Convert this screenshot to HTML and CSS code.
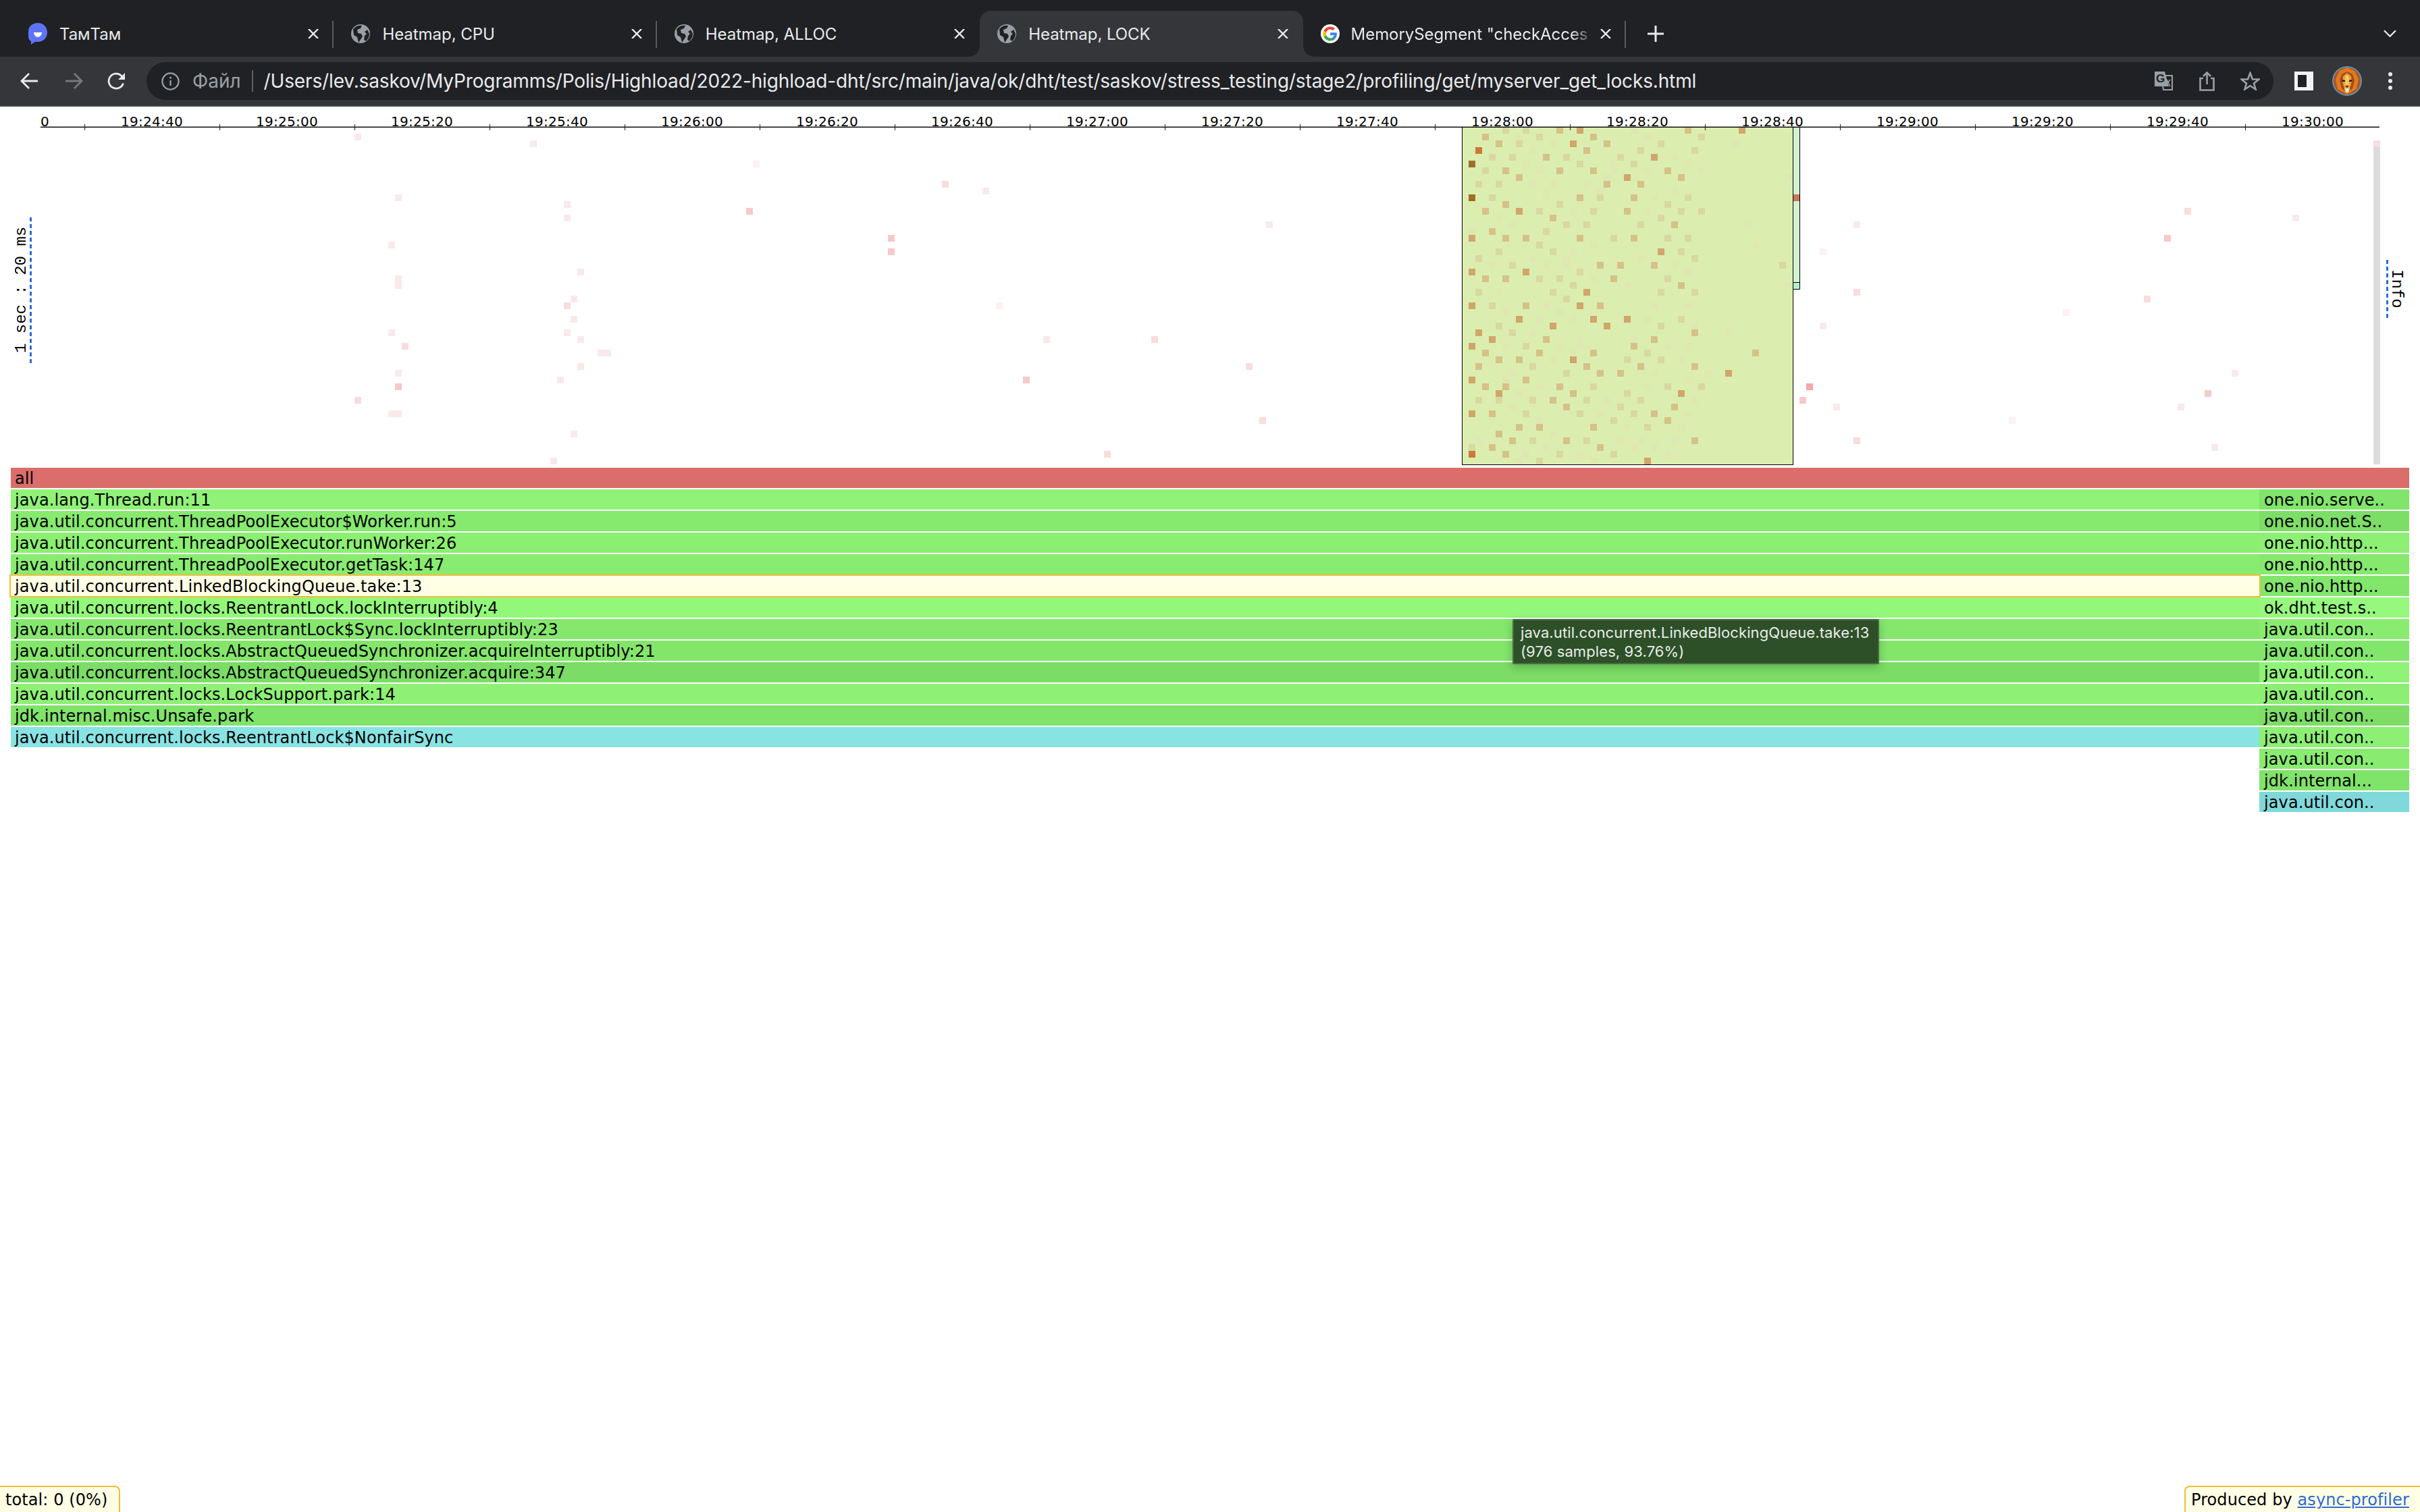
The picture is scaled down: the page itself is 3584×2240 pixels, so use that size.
FILE: index.html
```html
<!DOCTYPE html>
<html lang="en">
<head>
<meta charset="utf-8">
<title>Heatmap, LOCK</title>
<link rel="stylesheet" href="styles.css">
</head>
<body>
<header class="browser">
  <div class="tabstrip">
    <div class="tab sep">
      <svg class="favicon" viewBox="0 0 28 32"><path class="tt-bubble" d="M14 0C6 0 0 5 0 13v7c0 4 2 6 4 7l0 5 6-4h4c8 0 14-6 14-14S22 0 14 0z"/><path class="tt-mark" d="M8 14h12c0 4-3 7-6 7s-6-3-6-7z"/></svg>
      <span class="tab-title">ТамТам</span>
      <svg class="close" viewBox="0 0 16 14"><path d="M1 0l14 14M15 0L1 14"/></svg>
    </div>
    <div class="tab sep">
      <svg class="favicon" viewBox="0 0 28 28"><use href="#globe"/></svg>
      <span class="tab-title">Heatmap, CPU</span>
      <svg class="close" viewBox="0 0 16 14"><path d="M1 0l14 14M15 0L1 14"/></svg>
    </div>
    <div class="tab">
      <svg class="favicon" viewBox="0 0 28 28"><use href="#globe"/></svg>
      <span class="tab-title">Heatmap, ALLOC</span>
      <svg class="close" viewBox="0 0 16 14"><path d="M1 0l14 14M15 0L1 14"/></svg>
    </div>
    <div class="tab active">
      <svg class="favicon" viewBox="0 0 28 28"><use href="#globe"/></svg>
      <span class="tab-title">Heatmap, LOCK</span>
      <svg class="close" viewBox="0 0 16 14"><path d="M1 0l14 14M15 0L1 14"/></svg>
    </div>
    <div class="tab sep">
      <svg class="favicon" viewBox="0 0 48 48"><circle cx="24" cy="24" r="24" fill="#fff"/><path fill="#4285f4" d="M41 24.400c0-1.300-.1-2.500-.3-3.600H24v6.900h9.600c-.4 2.200-1.700 4-3.500 5.300v4.400h5.700c3.300-3 5.200-7.500 5.200-13z"/><path fill="#34a853" d="M24 42c4.800 0 8.800-1.600 11.800-4.300l-5.700-4.400c-1.600 1.100-3.600 1.700-6.100 1.700-4.700 0-8.600-3.200-10-7.400H8v4.500C11 38 17 42 24 42z"/><path fill="#fbbc05" d="M14 27.600c-.4-1.100-.6-2.300-.6-3.600s.2-2.500.6-3.600v-4.500H8C6.700 18.300 6 21 6 24s.7 5.700 2 8.100z"/><path fill="#ea4335" d="M24 13c2.600 0 5 .9 6.800 2.700l5.100-5.100C32.800 7.700 28.800 6 24 6 17 6 11 10 8 15.900l6 4.500c1.400-4.200 5.300-7.400 10-7.400z"/></svg>
      <span class="tab-title fade">MemorySegment "checkAcces</span>
      <svg class="close" viewBox="0 0 16 14"><path d="M1 0l14 14M15 0L1 14"/></svg>
    </div>
    <svg class="newtab" viewBox="0 0 24 24"><path d="M12 0v24M0 12h24"/></svg>
    <svg class="tablist" viewBox="0 0 20 11"><path d="M1 1l9 9 9-9"/></svg>
  </div>
  <div class="toolbar">
    <svg class="nav-icon back" viewBox="0 0 27 26"><path d="M26 13H3M13 2L2 13l11 11"/></svg>
    <svg class="nav-icon forward" viewBox="0 0 27 26"><path d="M1 13h23M14 2l11 11-11 11"/></svg>
    <svg class="nav-icon reload" viewBox="0 0 27 26"><path d="M23.500 16.500A11 11 0 1 1 21 5.500L24 9"/><path class="solid" d="M26 1v10H16z"/></svg>
    <div class="omnibox">
      <svg class="info-icon" viewBox="0 0 28 28"><circle cx="14" cy="14" r="12.500"/><path d="M14 12.500v8M14 7v3"/></svg>
      <span class="scheme">Файл</span>
      <span class="omni-sep"></span>
      <span class="url">/Users/lev.saskov/MyProgramms/Polis/Highload/2022-highload-dht/src/main/java/ok/dht/test/saskov/stress_testing/stage2/profiling/get/myserver_get_locks.html</span>
      <svg class="omni-icon translate" viewBox="0 0 28 28"><path class="tr-outline" d="M10 6h17v21H14z"/><path class="tr-fill" d="M1 0h15l6 22H1z"/><text class="tr-g" x="3" y="16">G</text><path class="tr-x" d="M19 12l5 10M24 12l-6 8"/></svg>
      <svg class="omni-icon share" viewBox="0 0 23 29"><path d="M6 10H1.500v17.500h20V10H17M11.500 19V1.500M6 7l5.500-5.500L17 7"/></svg>
      <svg class="omni-icon star" viewBox="0 0 29 28"><path d="M14.500 2l3.500 9.500h9.500l-7.500 6 2.700 9-8.200-5.500-8.200 5.500 2.700-9-7.500-6h9.500z"/></svg>
    </div>
    <svg class="panel-icon" viewBox="0 0 28 28"><path class="panel-frame" d="M0 0h28v28H0z"/><path class="panel-hole" d="M5 5h13v18H5z"/></svg>
    <svg class="avatar" viewBox="0 0 44 44">
      <ellipse cx="22" cy="22" rx="22" ry="22" fill="#5f93b5"/>
      <circle cx="22" cy="22" r="20" fill="#b4521c"/>
      <path fill="#e07a22" d="M22 2l11 5 6 12-3 15-14 8-14-8-3-15 6-12z"/>
      <path fill="#a04a18" d="M22 8l8 4 3 9-3 12-8 6-8-6-3-12 3-9z"/>
      <path fill="#eaa338" d="M22 10l6 5 1 8-3 10-4 3-4-3-3-10 1-8z"/>
      <path fill="#f4c96a" d="M20 14h4l1 14h-6z"/>
      <path fill="#2d180c" d="M15 20l4 1v2h-4zM29 20l-4 1v2h4zM19.500 29h5L22 32z"/>
      <path fill="#f2e0bd" d="M18 33h8l-2 6h-4z"/>
    </svg>
    <svg class="kebab" viewBox="0 0 6 26"><circle cx="3" cy="3" r="3"/><circle cx="3" cy="13" r="3"/><circle cx="3" cy="23" r="3"/></svg>
  </div>
</header>

<svg class="defs">
  <symbol id="globe" viewBox="0 0 28 28">
    <circle cx="14" cy="14" r="14" fill="#9aa0a6"/>
    <path fill="#202124" d="M3 7c4-5 9-6 13-5l-2 4-5 2 1 5 5 1 2 4-4 6-2 3-2-8-5-3zM24 8l3 6c0 4-2 8-5 11l-3-2 1-6 3-3-3-3z"/>
  </symbol>
</svg>

<main class="page">
  <section class="heatmap">
    <div class="ruler">
      <span class="ruler-zero">0</span>
      <span class="ruler-label">19:24:40</span><span class="ruler-label">19:25:00</span><span class="ruler-label">19:25:20</span><span class="ruler-label">19:25:40</span><span class="ruler-label">19:26:00</span><span class="ruler-label">19:26:20</span><span class="ruler-label">19:26:40</span><span class="ruler-label">19:27:00</span><span class="ruler-label">19:27:20</span><span class="ruler-label">19:27:40</span><span class="ruler-label">19:28:00</span><span class="ruler-label">19:28:20</span><span class="ruler-label">19:28:40</span><span class="ruler-label">19:29:00</span><span class="ruler-label">19:29:20</span><span class="ruler-label">19:29:40</span><span class="ruler-label">19:30:00</span>
    </div>
    <svg id="canvas" class="canvas" viewBox="0 158 3584 535"></svg>
    <a class="side-label scale">1 sec : 20 ms</a>
    <a class="side-label info">Info</a>
  </section>

  <section class="flame">
    <div class="frame root">all</div>
    <div class="flame-cols">
      <div class="flame-col main-col">
        <div class="frame s01">java.lang.Thread.run:11</div>
        <div class="frame s02">java.util.concurrent.ThreadPoolExecutor$Worker.run:5</div>
        <div class="frame s03">java.util.concurrent.ThreadPoolExecutor.runWorker:26</div>
        <div class="frame s04">java.util.concurrent.ThreadPoolExecutor.getTask:147</div>
        <div class="frame hovered">java.util.concurrent.LinkedBlockingQueue.take:13</div>
        <div class="frame s06">java.util.concurrent.locks.ReentrantLock.lockInterruptibly:4</div>
        <div class="frame s07">java.util.concurrent.locks.ReentrantLock$Sync.lockInterruptibly:23</div>
        <div class="frame s08">java.util.concurrent.locks.AbstractQueuedSynchronizer.acquireInterruptibly:21</div>
        <div class="frame s09">java.util.concurrent.locks.AbstractQueuedSynchronizer.acquire:347</div>
        <div class="frame s10">java.util.concurrent.locks.LockSupport.park:14</div>
        <div class="frame s11">jdk.internal.misc.Unsafe.park</div>
        <div class="frame cyan">java.util.concurrent.locks.ReentrantLock$NonfairSync</div>
      </div>
      <div class="flame-col side-col">
        <div class="frame t01">one.nio.serve..</div>
        <div class="frame t02">one.nio.net.S..</div>
        <div class="frame t03">one.nio.http...</div>
        <div class="frame t04">one.nio.http...</div>
        <div class="frame t05">one.nio.http...</div>
        <div class="frame t06">ok.dht.test.s..</div>
        <div class="frame t07">java.util.con..</div>
        <div class="frame t05">java.util.con..</div>
        <div class="frame t09">java.util.con..</div>
        <div class="frame t10">java.util.con..</div>
        <div class="frame t11">java.util.con..</div>
        <div class="frame t12">java.util.con..</div>
        <div class="frame t07">java.util.con..</div>
        <div class="frame t14">jdk.internal...</div>
        <div class="frame t15">java.util.con..</div>
      </div>
    </div>
    <div class="tooltip">java.util.concurrent.LinkedBlockingQueue.take:13<br>(976 samples, 93.76%)</div>
  </section>

  <footer class="status">
    <div class="status-box total">total: 0 (0%)</div>
    <div class="status-box produced">Produced by <a class="status-link">async-profiler</a></div>
  </footer>
</main>
<script src="heatmap.js"></script>
</body>
</html>
```
FILE: styles.css
```css
* { box-sizing: border-box; }
html, body { margin: 0; height: 100%; }
body {
  display: flex;
  flex-direction: column;
  height: 2240px;
  overflow: hidden;
  background: #fff;
  font-family: Inter, "Liberation Sans", Arial, sans-serif;
}
.defs { width: 0; height: 0; position: absolute; }

/* browser chrome */
.browser { flex: none; }
.tabstrip {
  height: 84px;
  background: #202124;
  display: flex;
  align-items: flex-end;
  padding-left: 16px;
  padding-right: 35px;
}
.tab {
  position: relative;
  flex: none;
  width: 478.4px;
  height: 68px;
  padding: 0 22px 0 26px;
  display: flex;
  align-items: center;
  color: #e8eaed;
  font-size: 24px;
  letter-spacing: -.05px;
}
.tab.active {
  background: #35363a;
  border-radius: 16px 16px 0 0;
}
.tab.active::before,
.tab.active::after {
  content: "";
  position: absolute;
  bottom: 0;
  width: 16px;
  height: 16px;
}
.tab.active::before { left: -16px; background: radial-gradient(circle at 0 0, transparent 15.5px, #35363a 16px); }
.tab.active::after { right: -16px; background: radial-gradient(circle at 100% 0, transparent 15.5px, #35363a 16px); }
.tab.sep::after {
  content: "";
  position: absolute;
  right: 0;
  top: 15px;
  width: 2px;
  height: 40px;
  background: #5a5b5e;
}
.favicon { width: 28px; height: 32px; flex: none; }
.tt-bubble { fill: #5f73f6; }
.tt-mark { fill: #fff; }
.tab-title {
  flex: 1;
  margin-left: 18px;
  white-space: nowrap;
  overflow: hidden;
}
.tab-title.fade {
  -webkit-mask-image: linear-gradient(90deg, #000 90%, transparent 100%);
  mask-image: linear-gradient(90deg, #000 90%, transparent 100%);
  margin-left: 17px;
  margin-right: 8px;
}
.close { width: 16px; height: 14px; flex: none; fill: none; stroke: #e8eaed; stroke-width: 2.400; }
.newtab { width: 24px; height: 24px; margin: 0 0 22px 32px; flex: none; fill: none; stroke: #e8eaed; stroke-width: 3; }
.tablist { width: 19px; height: 11px; margin: 0 0 29px auto; flex: none; fill: none; stroke: #e8eaed; stroke-width: 2.400; }

.toolbar {
  height: 74px;
  background: #35363a;
  border-bottom: 2px solid #4a4b4e;
  display: flex;
  align-items: center;
  padding-left: 30px;
}
.nav-icon { width: 27px; height: 26px; flex: none; fill: none; stroke: #e8eaed; stroke-width: 2.800; }
.nav-icon.forward { stroke: #77787b; margin-left: 39px; }
.nav-icon.reload { margin-left: 36px; }
.nav-icon .solid { fill: #e8eaed; stroke: none; }
.omnibox {
  width: 3150px;
  height: 56px;
  margin-left: 31px;
  border-radius: 28px;
  background: #202124;
  display: flex;
  align-items: center;
  padding: 0 20px 0 22px;
}
.info-icon { width: 27px; height: 27px; flex: none; fill: none; stroke: #9aa0a6; stroke-width: 2.400; }
.scheme { margin-left: 19px; font-size: 28px; color: #9aa0a6; }
.omni-sep { width: 2px; height: 32px; margin: 0 16px 0 16px; background: #5f6063; }
.url { flex: 1; font-size: 28px; letter-spacing: -.145px; color: #e8eaed; white-space: nowrap; overflow: hidden; }
.omni-icon { flex: none; }
.translate { width: 28px; height: 28px; margin-right: 39px; }
.tr-outline { fill: #202124; stroke: #9aa0a6; stroke-width: 2; }
.tr-fill { fill: #9aa0a6; }
.tr-g { font-size: 17px; font-weight: 700; fill: #202124; font-family: "Liberation Sans", Arial, sans-serif; }
.tr-x { fill: none; stroke: #9aa0a6; stroke-width: 1.600; }
.share { width: 23px; height: 29px; margin-right: 38px; fill: none; stroke: #9aa0a6; stroke-width: 2.600; }
.star { width: 29px; height: 28px; fill: none; stroke: #9aa0a6; stroke-width: 2.600; }
.panel-icon { width: 28px; height: 28px; margin-left: 31px; flex: none; }
.panel-frame { fill: #f1f3f4; }
.panel-hole { fill: #202124; }
.avatar { width: 44px; height: 44px; margin-left: 28px; flex: none; }
.kebab { width: 6px; height: 26px; margin-left: 39px; flex: none; fill: #e8eaed; }

/* page */
.page {
  flex: 1;
  min-height: 0;
  display: flex;
  flex-direction: column;
  font-family: "DejaVu Sans", Verdana, sans-serif;
  color: #000;
}
.heatmap { position: relative; flex: none; height: 535px; }
.ruler {
  position: relative;
  z-index: 1;
  display: flex;
  height: 30px;
  padding: 7px 0 0 60px;
  font-size: 20px;
  line-height: 30px;
  letter-spacing: .25px;
  white-space: nowrap;
}
.ruler-zero { width: 65px; flex: none; }
.ruler-label { width: 200px; flex: none; text-align: center; }
.canvas { position: absolute; left: 0; top: 0; width: 3584px; height: 535px; shape-rendering: crispEdges; }
.axis { stroke: #000; stroke-width: 1; }
.axis-soft { stroke: #999; stroke-width: 1; }
.tick { stroke: #222; stroke-width: 1; }
.sel-box { stroke: #000; stroke-width: 1; fill: #dbeeb0; }
.sel-strip { stroke: #000; stroke-width: 1; fill: #d3f2d1; }
.sel-strip-end { stroke: #000; stroke-width: 1; fill: #b6efd0; }
.sel-strip-hot { fill: #c9765a; }
.gray-col { fill: #dcdcdc; }
.lv-a { fill: #dfe7b3; }
.lv-b { fill: #d8d8a0; }
.lv-c { fill: #d6c288; }
.lv-d { fill: #d1a66a; }
.lv-e { fill: #cc7a38; }
.lv-f { fill: #a06e2a; }
.lv-p { fill: #fcf2f2; }
.lv-q { fill: #f9eaea; }
.lv-r { fill: #f9dcdc; }
.lv-s { fill: #f7c9c9; }
.lv-t { fill: #f5a8a8; }
.side-label {
  position: absolute;
  z-index: 2;
  writing-mode: vertical-rl;
  font-family: "Liberation Mono", "DejaVu Sans Mono", monospace;
  font-size: 24px;
  line-height: 24px;
  width: 27px;
  text-align: center;
  white-space: nowrap;
  background-image: repeating-linear-gradient(180deg, #2b6cd8 0 6px, transparent 6px 10px);
  background-size: 3px 100%;
  background-repeat: no-repeat;
}
.side-label.scale {
  left: 20px;
  top: 163px;
  height: 217px;
  transform: rotate(180deg);
  background-position: left top;
}
.side-label.info {
  left: 3534px;
  top: 227px;
  height: 86px;
  background-position: left top;
}

.flame { position: relative; flex: none; margin: 0 16px; width: 3552px; }
.flame-cols { display: flex; margin-top: 2px; }
.flame-col { display: flex; flex-direction: column; gap: 2px; }
.main-col { width: 3330px; flex: none; }
.side-col { width: 222px; flex: none; }
.frame {
  height: 30px;
  padding-left: 6px;
  font-size: 24px;
  line-height: 32px;
  letter-spacing: .11px;
  white-space: nowrap;
  overflow: hidden;
}
.root { background: #db6d6a; }
.s01 { background: #90f378; }
.s02 { background: #86ea6e; }
.s03 { background: #8bef72; }
.s04 { background: #88ec70; }
.s06 { background: #93f87a; }
.s07 { background: #85e86d; }
.s08 { background: #83e66b; }
.s09 { background: #7bdd65; }
.s10 { background: #8ef176; }
.s11 { background: #80e36a; }
.cyan { background: #88e3e3; }
.hovered { background: #ffffe6; outline: 2px solid #f5bb3a; position: relative; z-index: 1; }
.side-col .frame { padding-left: 7px; }
.t01 { background: #80e56a; }
.t02 { background: #7cde66; }
.t03 { background: #8def74; }
.t04 { background: #86e96e; }
.t05 { background: #82e66c; }
.t06 { background: #96f97d; }
.t07 { background: #89ec71; }
.t09 { background: #8ff377; }
.t10 { background: #8cef74; }
.t11 { background: #7ddd66; }
.t12 { background: #8df074; }
.t14 { background: #80e36a; }
.t15 { background: #80d8da; }

.tooltip {
  position: absolute;
  left: 2224px;
  top: 224px;
  width: 543px;
  height: 67px;
  z-index: 3;
  padding: 4px 0 0 10px;
  background: #2d5028;
  border: 2px solid #476b42;
  border-radius: 2px;
  box-shadow: 0 4px 14px rgba(0, 0, 0, .25);
  color: #e9ece8;
  font-family: Inter, "Liberation Sans", Arial, sans-serif;
  font-size: 22px;
  line-height: 28px;
  letter-spacing: .1px;
  white-space: nowrap;
}

.status {
  margin-top: auto;
  display: flex;
  justify-content: space-between;
  align-items: flex-end;
}
.status-box {
  height: 39px;
  background: #ffffe6;
  border: 2px solid #f5bb3a;
  border-bottom: 0;
  font-size: 24px;
  line-height: 38px;
  letter-spacing: .09px;
  white-space: nowrap;
}
.total { width: 178px; padding-left: 8px; border-left: 0; border-top-right-radius: 8px; }
.produced { width: 349px; padding-left: 8px; border-right: 0; border-top-left-radius: 8px; }
.status-link { color: #2f6ad6; text-decoration: underline; }
```
FILE: heatmap.js
```js
const SVG_NS = "http://www.w3.org/2000/svg";
const canvas = document.getElementById("canvas");

const TOP = 188;
const CELL = 10;
const SEL_LEFT = 2165;
const SEL_RIGHT = 2655;
const SEL_BOTTOM = 688;

const SELECTED_ROWS = [
  "6b 9b 14c 17d 25a 33c 41d",
  "3c 8a 11b 19c 27a 35b",
  "5c 8b 13a 16d 21c 29b 40a",
  "2e 10a 18c 26b 34b",
  "4b 7b 12c 15b 23b 28d 31a",
  "1f 9a 17b 22a 25b 33a",
  "3b 6c 11a 14c 19c 22a 27a 30c 35a",
  "8c 21a 24d 32c 48a",
  "2b 5b 10a 13a 18a 21c 26c",
  "12a 20a 31a",
  "1f 4b 12a 17c 20b 25c 28a 33b",
  "6c 14b 30b",
  "3c 8d 11b 16a 19b 24c 27a 32b 35b",
  "5a 13c 29b",
  "7a 15b 18b 26b 31c 42a",
  "1a 4c 12b",
  "1d 6c 9c 17c 22b 25c 30b 33b",
  "11b 19a 43a",
  "5b 13b 16a 29d 32b",
  "2b 10a 15a 26a 34b",
  "4a 7b 12a 15a 20c 23c 28c 31a 47b",
  "1d 9d 17b 33a",
  "3c 6c 11b 14b 19a 22c 30b",
  "16b 24a 32c 48a",
  "2b 5a 13b 18d 29b 34b",
  "15b",
  "1d 4b 9c 12a 17d 20c 28a 33a",
  "6a 14a",
  "8d 11a 16a 19d 24d 27a 32b",
  "5b 13d 21d 29b 34a",
  "2d 7b 10a 34c 39a",
  "4d 12c 17a 25a 28c",
  "1d 6a 9b 14a 17a 25c 30a 33a",
  "3c 11c 16a 19c 27b 43c",
  "5c 8c 13a 16d 24b 29b 32a",
  "2c 10b 18c 26c 34c",
  "7a 15b 20c 23c 28a 36a 39d",
  "1d 6a 9c 33a",
  "3c 6c 11a 14c 19b 27a 30b 35b",
  "5d 8a 16c 24b 32d",
  "2b 5b 10b 13c 18b 21a 26b 34a",
  "7a 15c 23b 31c",
  "1d 4c 9b 17b 20a 25b 28c 33a",
  "11a 22b 30c",
  "8c 11c 19c 24a 27b 32a",
  "5c 13a",
  "2a 7c 10b 15c 18b 23a 26a 31a 34c",
  "1b 4c 12a 20c 25a 28a",
  "1e 6c 9a 14b 17a 22b 30a",
  "8a 11b 19a 27d"
];

const BACKGROUND_CELLS = [
  [525,1,"q"],[785,2,"q"],[585,10,"q"],[835,11,"q"],[835,13,"q"],[575,17,"q"],[855,21,"q"],
  [585,22,"q"],[585,23,"q"],[845,25,"q"],[835,26,"r"],[845,28,"q"],[575,30,"q"],[835,30,"q"],
  [855,31,"q"],[595,32,"r"],[885,33,"q"],[895,33,"q"],[855,35,"q"],[585,36,"q"],[825,37,"q"],
  [585,38,"s"],[525,40,"r"],[575,42,"q"],[585,42,"q"],[845,45,"q"],[815,49,"q"],
  [1115,5,"p"],[1395,8,"r"],[1455,9,"q"],[1105,12,"s"],[1875,14,"q"],[1315,16,"s"],[1315,18,"s"],
  [1475,26,"p"],[1545,31,"q"],[1705,31,"r"],[1845,35,"r"],[1515,37,"s"],[1865,43,"r"],[1635,48,"r"],
  [2745,14,"q"],[2695,18,"p"],[2745,24,"r"],[2695,29,"q"],[2675,38,"t"],[2665,40,"s"],[2715,41,"q"],
  [2745,46,"r"],[2975,43,"p"],[3055,27,"p"],[3175,25,"r"],[3205,16,"s"],[3235,12,"r"],[3225,41,"q"],
  [3265,39,"s"],[3275,47,"q"],[3305,36,"q"],[3395,13,"q"]
];

function add(tag, cls, attrs) {
  const el = document.createElementNS(SVG_NS, tag);
  if (cls) el.setAttribute("class", cls);
  for (const key in attrs) el.setAttribute(key, attrs[key]);
  canvas.appendChild(el);
  return el;
}

function cell(x, y, level) {
  add("rect", "lv-" + level, { x, y, width: CELL, height: CELL });
}

BACKGROUND_CELLS.forEach(([x, row, level]) => cell(x, TOP + row * CELL, level));

add("rect", "gray-col", { x: 3515, y: 218, width: 10, height: 470 });
cell(3515, 208, "r");

add("rect", "sel-strip", { x: SEL_RIGHT + 0.5, y: TOP + 0.5, width: 10, height: 230 });
add("rect", "sel-strip-end", { x: SEL_RIGHT + 0.5, y: 418.5, width: 10, height: 10 });
add("rect", "sel-strip-hot", { x: SEL_RIGHT + 1, y: 288, width: 9, height: 10 });

add("rect", "sel-box", {
  x: SEL_LEFT + 0.5, y: TOP + 0.5,
  width: SEL_RIGHT - SEL_LEFT, height: SEL_BOTTOM - TOP
});

SELECTED_ROWS.forEach((row, r) => {
  row.split(" ").forEach(token => {
    const col = parseInt(token, 10);
    cell(SEL_LEFT + col * CELL, TOP + r * CELL, token.slice(-1));
  });
});

add("line", "axis-soft", { x1: 60, y1: 187.5, x2: 3524, y2: 187.5 });
add("line", "axis", { x1: 60, y1: 188.5, x2: 3524, y2: 188.5 });
for (let x = 125; x < 3400; x += 200) {
  add("line", "tick", { x1: x + 0.5, y1: 184, x2: x + 0.5, y2: 193 });
}
```
